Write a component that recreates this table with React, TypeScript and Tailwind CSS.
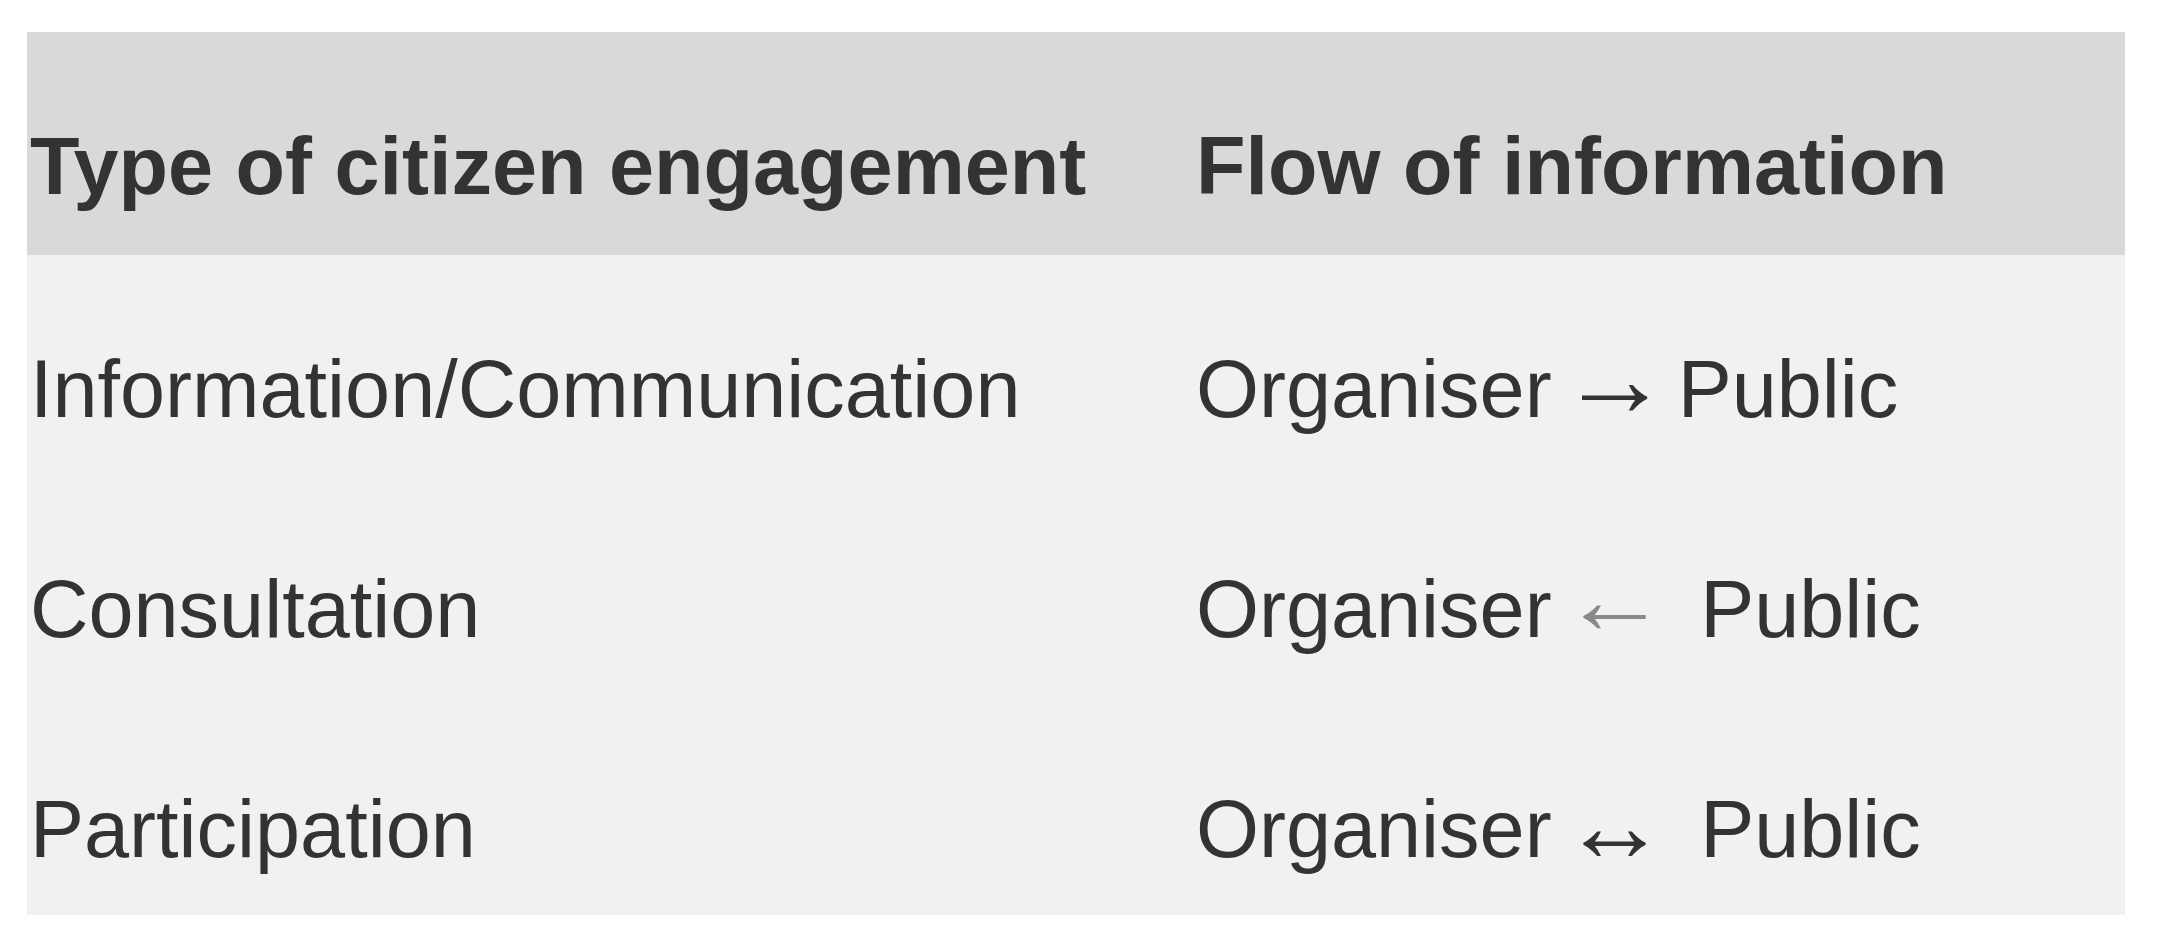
import React from 'react';

interface Row {
   type: string;
   arrow: string;
   arrowClass: string;
   gap: string;
}

const rows: Row[] = [
   { type: 'Information/Communication', arrow: '→', arrowClass: 'text-[#333] font-bold -translate-y-[11px] scale-x-[1.36] scale-y-[1.35]', gap: ' ' },
   { type: 'Consultation', arrow: '←', arrowClass: 'text-[#8a8a8a] -translate-y-[10px] scale-x-[1.3] scale-y-[1.2]', gap: '  ' },
   { type: 'Participation', arrow: '↔', arrowClass: 'text-[#333] -translate-y-[4px] scale-x-[1.3] scale-y-[1.3]', gap: '  ' },
];

export default function App() {
   return (
      <div className="min-h-screen w-full bg-white pt-[32px] pl-[27px]" style={{ fontFamily: '"Liberation Sans", Arial, sans-serif' }}>
         <div className="w-[2098px] text-[81px] leading-[92px] text-[#333]">
            <div className="grid grid-cols-[1166px_1fr] bg-[#d9d9d9] font-bold h-[223px] pt-[88px]">
               <div className="pl-[3px]">Type of citizen engagement</div>
               <div className="pl-[3px]">Flow of information</div>
            </div>
            <div className="bg-[#f1f1f1]">
               {rows.map(r => (
                  <div key={r.type} className="grid grid-cols-[1166px_1fr] h-[220px] pt-[88px]">
                     <div className="pl-[3px]">{r.type}</div>
                     <div className="pl-[3px] whitespace-pre">
                        Organiser <span className={`inline-block ${r.arrowClass}`}>{r.arrow}</span>{r.gap}Public
                     </div>
                  </div>
               ))}
            </div>
         </div>
      </div>
   );
}
